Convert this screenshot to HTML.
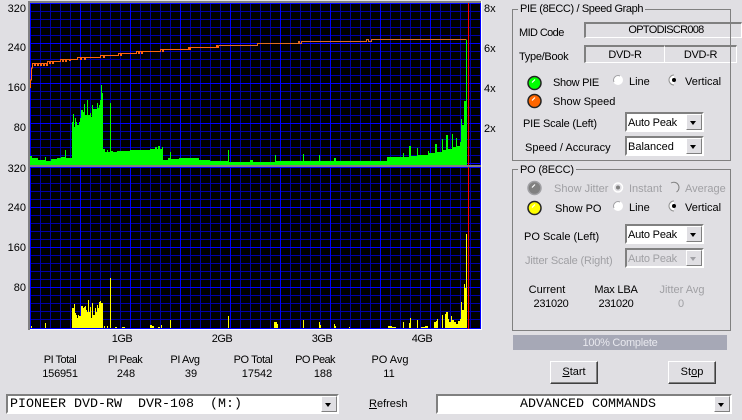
<!DOCTYPE html>
<html><head><meta charset="utf-8"><style>
html,body{margin:0;padding:0;background:#e0dfe3}
body{position:relative;width:742px;height:420px;overflow:hidden;font:11px/13px "Liberation Sans",Arial,sans-serif;color:#000}
.t{position:absolute;white-space:nowrap;padding-top:1px}
.c{position:absolute;width:100px;text-align:center;white-space:nowrap;padding-top:1px}
.r{position:absolute;width:30px;text-align:right;padding-top:1px}
.g{color:#a0a0a4}
.f{position:absolute;box-sizing:border-box;border-style:solid;border-width:2px 1px 1px 2px;border-color:#808080 #fff #fff #808080;text-align:center;line-height:16px}
.fs{position:absolute;box-sizing:border-box;border:1px solid #808080;left:512px;width:219px}
.lg{position:absolute;left:518px;background:#e0dfe3;padding:0 2px;white-space:nowrap}
.s{position:absolute;box-sizing:border-box;border:2px solid;border-color:#808080 #fff #fff #808080;background:#fff;line-height:18px;padding-left:1px;white-space:pre}
.s i{position:absolute;right:0;top:0;bottom:0;width:16px;box-sizing:border-box;background:#e0dfe3;border:1px solid;border-color:#fff #808080 #808080 #fff}
.s i:after{content:"";position:absolute;left:3px;top:6px;border:3.5px solid transparent;border-top:4px solid #000;border-bottom:0}
.d{color:#a0a0a4;background:#e0dfe3}
.d i:after{border-top-color:#a0a0a4}
.m{font-family:"Liberation Mono","Courier New",monospace;font-size:13.33px;line-height:18px}
.b{position:absolute;box-sizing:border-box;border:1px solid;border-color:#fff #404040 #404040 #fff;box-shadow:inset -1px -1px 0 #808080;text-align:center;line-height:21px}
</style></head><body>
<svg style="position:absolute;left:0;top:0" width="742" height="420" shape-rendering="crispEdges">
<rect x="28" y="1" width="454" height="329" fill="#fff"/>
<rect x="28" y="1" width="453" height="2" fill="#808080"/>
<rect x="28" y="1" width="2" height="329" fill="#808080"/>
<rect x="28" y="165" width="453" height="2" fill="#808080"/>
<rect x="30" y="3" width="451" height="162" fill="#000"/>
<rect x="30" y="167" width="451" height="162" fill="#000"/>
<path fill="none" stroke="#0000a8" d="M40.500 3V165M50.500 3V165M60.500 3V165M70.500 3V165M90.500 3V165M100.500 3V165M110.500 3V165M120.500 3V165M140.500 3V165M150.500 3V165M160.500 3V165M170.500 3V165M190.500 3V165M200.500 3V165M210.500 3V165M220.500 3V165M240.500 3V165M250.500 3V165M260.500 3V165M270.500 3V165M290.500 3V165M300.500 3V165M310.500 3V165M320.500 3V165M340.500 3V165M350.500 3V165M360.500 3V165M370.500 3V165M390.500 3V165M400.500 3V165M410.500 3V165M420.500 3V165M440.500 3V165M450.500 3V165M460.500 3V165M470.500 3V165
M40.500 167V329M50.500 167V329M60.500 167V329M70.500 167V329M90.500 167V329M100.500 167V329M110.500 167V329M120.500 167V329M140.500 167V329M150.500 167V329M160.500 167V329M170.500 167V329M190.500 167V329M200.500 167V329M210.500 167V329M220.500 167V329M240.500 167V329M250.500 167V329M260.500 167V329M270.500 167V329M290.500 167V329M300.500 167V329M310.500 167V329M320.500 167V329M340.500 167V329M350.500 167V329M360.500 167V329M370.500 167V329M390.500 167V329M400.500 167V329M410.500 167V329M420.500 167V329M440.500 167V329M450.500 167V329M460.500 167V329M470.500 167V329
M30 11.500H481M30 19.500H481M30 27.500H481M30 35.500H481M30 51.500H481M30 59.500H481M30 67.500H481M30 75.500H481M30 91.500H481M30 99.500H481M30 107.500H481M30 115.500H481M30 131.500H481M30 139.500H481M30 147.500H481M30 155.500H481
M30 175.500H481M30 183.500H481M30 191.500H481M30 199.500H481M30 215.500H481M30 223.500H481M30 231.500H481M30 239.500H481M30 255.500H481M30 263.500H481M30 271.500H481M30 279.500H481M30 295.500H481M30 303.500H481M30 311.500H481M30 319.500H481"/>
<path fill="none" stroke="#0000ff" d="M30.500 3V165M80.500 3V165M130.500 3V165M180.500 3V165M230.500 3V165M280.500 3V165M330.500 3V165M380.500 3V165M430.500 3V165M480.500 3V165
M30.500 167V329M80.500 167V329M130.500 167V329M180.500 167V329M230.500 167V329M280.500 167V329M330.500 167V329M380.500 167V329M430.500 167V329M480.500 167V329
M30 3.500H481M30 43.500H481M30 83.500H481M30 123.500H481M30 163.500H481
M30 167.500H481M30 207.500H481M30 247.500H481M30 287.500H481M30 328.500H481"/>
<path fill="#00ff00" d="M30 165V156H32V158H38V160H45V157H46V161H51V159H57V158H61V157H65V150H66V158H72V122H73V114H74V127H75V118H76V122H77V125H79V122H80V118H81V110H83V112H84V104H85V115H87V100H88V115H90V113H91V117H92V105H93V109H97V103H98V108H99V105H100V100H101V85H102V93H103V149H105V152H107V150H108V152H110V103H111V151H113V152H117V151H130V150H150V149H155V147H157V149H158V146H160V149H162V147H163V160H168V158H170V152H171V159H179V158H199V160H210V161H228V150H229V162H250V160H253V162H275V155H276V161H303V154H304V161H319V155H320V161H334V158H336V161H387V157H403V153H404V157H409V146H411V156H417V148H418V155H428V151H429V153H435V144H437V152H442V139H443V150H446V135H448V149H452V134H453V147H456V138H457V146H460V142H461V119H462V125H464V101H466V40H467V165Z"/>
<path fill="#ffff00" d="M31 328V326H32V328H45V323H46V328H72V308H74V304H75V313H76V315H77V318H78V315H79V316H81V306H83V308H84V307H85V306H86V310H87V312H88V300H89V312H90V307H91V318H92V303H93V315H95V308H96V312H97V305H98V308H99V302H100V301H101V303H103V328H104V326H105V328H107V326H108V328H110V278H111V328H115V327H117V328H122V327H125V328H150V325H152V326H154V328H158V327H160V328H161V325H162V328H170V320H171V328H228V316H229V328H274V322H277V324H278V328H303V320H304V328H319V322H320V325H321V328H334V324H335V326H336V328H349V327H350V328H388V326H392V327H396V328H403V322H404V328H409V323H410V318H411V328H417V320H418V328H421V327H425V326H428V328H434V322H436V321H437V319H438V328H442V315H443V328H445V314H446V312H448V319H449V322H451V316H452V320H454V322H456V324H458V321H460V319H461V302H462V310H464V284H465V288H466V234H467V328Z"/>
<rect x="468" y="3" width="1" height="162" fill="#ff0000"/><rect x="468" y="167" width="1" height="162" fill="#ff0000"/>
<path fill="none" stroke="#ff6410" d="M30.500 88V80H31.500V68H32.500V63.500H34.500V65.500H35.500V63.500H37.500V65.500H38.500V63.500H40.500V65.500H41.500V63.500H43.500V65.500H44.500V63.500H46.500V65.500H47.500V61.500H49.500V63.500H50.500V61.500H52.500V63.500H53.500V61.500H60.500V59.500H62.500V61.500H63.500V59.500H65.500V61.500H66.500V59.500H69.500V60.500H70.500V59.500H77.500V57.500H80.500V59.500H81.500V57.500H84.500V59.500H85.500V57.500H100.500V55.500H103.500V57.500H104.500V55.500H118.500V53.500H120.500V55.500H121.500V53.500H136.500V51.500H138.500V53.500H139.500V51.500H141.500V53.500H142.500V51.500H160.500V49.500H162.500V51.500H163.500V49.500H188.500V47.500H189.500V49.500H190.500V47.500H216.500V45.500H217.500V47.500H218.500V45.500"/>
<path fill="none" stroke="#e06c24" d="M218.500 45.500H257.500V43.500H298.500V41.500H299.500V43.500H301.500V41.500H366.500V39.500H368.500V41.500H371.500V39.500H466.500"/>
</svg>

<div class="r" style="left:-4px;top:2px">320</div><div class="r" style="left:-4px;top:41px">240</div><div class="r" style="left:-4px;top:81px">160</div><div class="r" style="left:-4px;top:121px">80</div>
<div class="r" style="left:-4px;top:162px">320</div><div class="r" style="left:-4px;top:201px">240</div><div class="r" style="left:-4px;top:241px">160</div><div class="r" style="left:-4px;top:281px">80</div>
<div class="t" style="left:484px;top:2px">8x</div><div class="t" style="left:484px;top:42px">6x</div><div class="t" style="left:484px;top:82px">4x</div><div class="t" style="left:484px;top:122px">2x</div>

<div class="c" style="left:72px;top:332px;letter-spacing:-.5px">1GB</div><div class="c" style="left:172px;top:332px;letter-spacing:-.5px">2GB</div><div class="c" style="left:272px;top:332px;letter-spacing:-.5px">3GB</div><div class="c" style="left:372px;top:332px;letter-spacing:-.5px">4GB</div>
<div class="c" style="left:10px;top:353px;letter-spacing:-.5px">PI Total</div><div class="c" style="left:75px;top:353px;letter-spacing:-.6px">PI Peak</div><div class="c" style="left:135px;top:353px;letter-spacing:-.4px">PI Avg</div><div class="c" style="left:203px;top:353px;letter-spacing:-.4px">PO Total</div><div class="c" style="left:265px;top:353px;letter-spacing:-.6px">PO Peak</div><div class="c" style="left:340px;top:353px">PO Avg</div>
<div class="c" style="left:10px;top:367px;letter-spacing:-.2px">156951</div><div class="c" style="left:76px;top:367px">248</div><div class="c" style="left:141px;top:367px">39</div><div class="c" style="left:207px;top:367px">17542</div><div class="c" style="left:273px;top:367px">188</div><div class="c" style="left:339px;top:367px">11</div>

<div class="t" style="left:519px;top:26px;letter-spacing:-.6px">MID Code</div>
<div class="f" style="left:584px;top:22px;width:158px;height:16px;padding-left:5px;line-height:13px;letter-spacing:-.7px">OPTODISCR008</div>
<div class="t" style="left:519px;top:50px;letter-spacing:-.3px">Type/Book</div>
<div class="f" style="left:584px;top:45px;width:81px;height:18px;letter-spacing:-.3px">DVD-R</div>
<div class="f" style="left:665px;top:45px;width:72px;height:18px;border-left:0;letter-spacing:-.3px">DVD-R</div>
<div class="fs" style="top:9px;height:152px"></div>
<div class="lg" style="top:3px;letter-spacing:-.37px">PIE (8ECC) / Speed Graph</div>
<div class="fs" style="top:169px;height:162px"></div>
<div class="lg" style="top:164px;letter-spacing:-.2px">PO (8ECC)</div>

<svg style="position:absolute;left:512px;top:70px" width="220" height="150">
<g stroke="#222" stroke-width="1.500"><circle cx="22.500" cy="13" r="6.500" fill="#00ff00"/><circle cx="22.500" cy="31" r="6.500" fill="#ff6600"/><circle cx="22.500" cy="138" r="6.500" fill="#ffff00"/></g>
<circle cx="22.500" cy="118" r="6.500" fill="#808080" stroke="#a0a0a4" stroke-width="1.500"/>
<path stroke="#fff" stroke-width="1.200" d="M20 12.500l3-3M20 30.500l3-3M20 117.500l3-3M20 137.500l3-3"/>
<g fill="#fff"><circle cx="106" cy="10" r="5"/><circle cx="106" cy="136" r="5"/></g>
<path d="M102 12a4.500 4.500 0 0 1 6-6M102 138a4.500 4.500 0 0 1 6-6" fill="none" stroke="#a0a0a4"/>
<path d="M162 5a5 5 0 0 0 0 10M162 131a5 5 0 0 0 0 10" fill="#fff" stroke="#909090"/>
<circle cx="162" cy="10" r="2" fill="#000"/><circle cx="162" cy="136" r="2" fill="#000"/>
<circle cx="106" cy="117.500" r="4.500" fill="#e0dfe3" stroke="#fff" stroke-width="1.500"/><circle cx="106" cy="117.500" r="2" fill="#808080"/>
<path d="M159 113a5 5 0 0 1 5.500 9" fill="none" stroke="#808080"/>
</svg>

<div class="t" style="left:553px;top:76px;letter-spacing:-.3px">Show PIE</div>
<div class="t" style="left:553px;top:95px">Show Speed</div>
<div class="t" style="left:629px;top:75px">Line</div>
<div class="t" style="left:685px;top:75px">Vertical</div>
<div class="t" style="left:523px;top:117px;letter-spacing:-.2px">PIE Scale (Left)</div>
<div class="t" style="left:525px;top:141px">Speed / Accuracy</div>
<div class="s" style="left:625px;top:112px;width:79px;height:20px;letter-spacing:-.2px">Auto Peak<i></i></div>
<div class="s" style="left:625px;top:136px;width:79px;height:20px">Balanced<i></i></div>

<div class="t g" style="left:554px;top:182px">Show Jitter</div>
<div class="t g" style="left:629px;top:182px">Instant</div>
<div class="t g" style="left:685px;top:182px">Average</div>
<div class="t" style="left:555px;top:202px">Show PO</div>
<div class="t" style="left:629px;top:201px">Line</div>
<div class="t" style="left:685px;top:201px">Vertical</div>
<div class="t" style="left:524px;top:230px">PO Scale (Left)</div>
<div class="t g" style="left:525px;top:254px;letter-spacing:-.15px">Jitter Scale (Right)</div>
<div class="s" style="left:625px;top:224px;width:79px;height:20px;letter-spacing:-.2px">Auto Peak<i></i></div>
<div class="s d" style="left:625px;top:248px;width:79px;height:20px;letter-spacing:-.2px">Auto Peak<i></i></div>
<div class="c" style="left:497px;top:283px">Current</div><div class="c" style="left:566px;top:283px;letter-spacing:-.2px">Max LBA</div><div class="c g" style="left:632px;top:283px">Jitter Avg</div>
<div class="c" style="left:501px;top:297px;letter-spacing:-.3px">231020</div><div class="c" style="left:566px;top:297px;letter-spacing:-.3px">231020</div><div class="c g" style="left:631px;top:297px">0</div>

<div style="position:absolute;left:513px;top:335px;width:214px;height:15px;background:#a6a8b6;color:#e8e8ee;text-align:center;line-height:17px;letter-spacing:-.25px">100% Complete</div>
<div class="b" style="left:550px;top:361px;width:48px;height:23px"><u>S</u>tart</div>
<div class="b" style="left:668px;top:361px;width:48px;height:23px">St<u>o</u>p</div>
<div class="t" style="left:369px;top:397px"><u>R</u>efresh</div>
<div class="s m" style="left:6px;top:394px;width:333px;height:20px;padding-left:2px">PIONEER DVD-RW  DVR-108  (M:)<i></i></div>
<div class="s m" style="left:436px;top:394px;width:296px;height:20px;text-align:center;padding-left:8px">ADVANCED COMMANDS<i></i></div>
</body></html>
